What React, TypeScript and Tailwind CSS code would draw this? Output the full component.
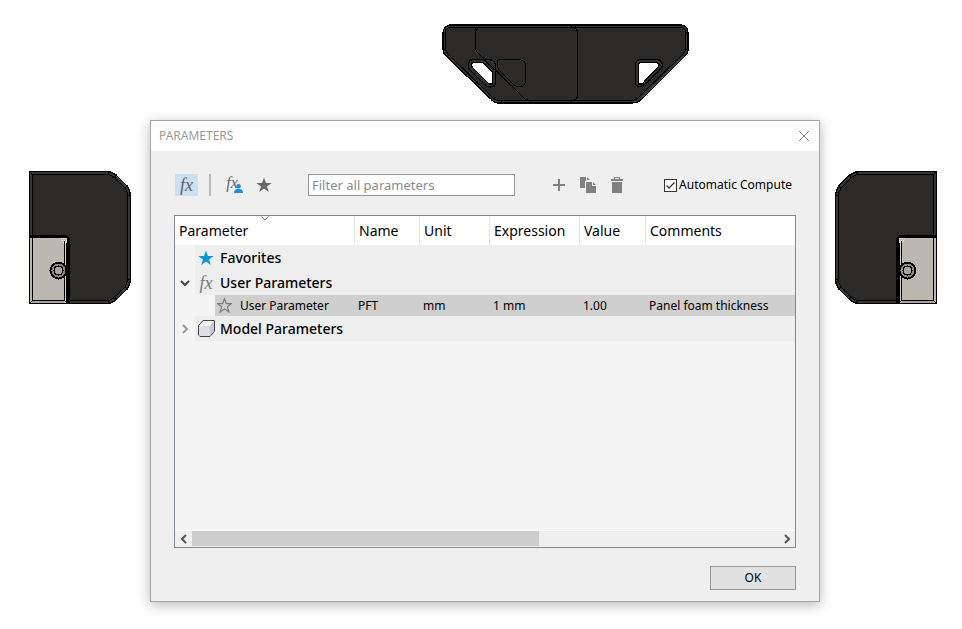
import type { ReactNode } from "react";

const columns = ["Parameter", "Name", "Unit", "Expression", "Value", "Comments"];

function FrontView() {
  return (
    <svg className="absolute left-[442px] top-[24px]" width="247" height="80" viewBox="0 0 247 80" fill="none" stroke="#000" shapeRendering="crispEdges" aria-hidden="true">
      <path
        fillRule="evenodd"
        fill="#343534"
        strokeWidth="1.4"
        d="M8 1H239Q246 2 246 9V26Q246 29 243 32L199 76Q195 79 190 79H57Q52 79 49 75L3 31Q1 28 1 25V9Q2 2 8 1Z"
      />
      <path fill="#2b2a28" d="M8 3.500H239Q243 4 243.500 8V26Q243 28 240 31L197 73Q194 76.500 189 76.500H58Q53 76.500 50 73L6 30Q3.500 27 3.500 24V8Q4 4 8 3.500Z" />
      <path d="M33.500 3V23Q33.500 27 36 29L83 75L88 77M36 4Q34 5 33.500 8M130 3.500Q135.500 4 135.500 9V71Q135.500 76 130 76.500" />
      <path d="M55.500 37Q55 35.500 59 35.500H77Q83.500 36 83.500 42V57Q83 63 77 63Q74 63 71 60L57 46Q54 42 55.500 37" />
      <path fill="#2f302f" strokeWidth="1.300" d="M31 35.500H47Q53.500 36 53.500 43V58Q53 63 48 63Q45 63 42 60L28 46Q25 42 27 38Q28 35.500 31 35.500Z" />
      <path fill="#fff" strokeWidth="1.300" d="M31 38.500H41L50.500 48V60H47L30 43Q28.500 40 31 38.500Z" />
      <path d="M42 35.500L54 47" />
      <path fill="#2f302f" strokeWidth="1.300" d="M198 35.500H215Q220 36 220.500 41Q220 44 217 47L203 60Q199 63.500 195 62Q193.500 61 193.500 57V41Q194 36 198 35.500Z" />
      <path fill="#fff" strokeWidth="1.300" d="M198 38.500H215Q218 40 216.500 43L200 60H196.500V41Q197 39 198 38.500Z" />
      <path d="M8.500 0V3M37.500 0V3M129.500 0V3M133.500 0V3M238.500 0V3M0 17.500V9.500H3M243 8.500H246M0 25.500H4M243 25.500H246M59.500 76V80M88.500 76V80M129.500 76V80M188.500 76V80" />
    </svg>
  );
}

function SideView({ className }: { className: string }) {
  return (
    <svg className={"absolute top-[171px] " + className} width="102" height="133" viewBox="0 0 102 133" fill="none" stroke="#000" shapeRendering="crispEdges" aria-hidden="true">
      <path fill="#343534" strokeWidth="1.400" d="M.7.700H79Q84 1 88 5L98 15Q101.300 19 101.300 23V109Q101 115 98 118L88 128Q84 132 79 132.300H.7Z" />
      <path fill="#2b2a28" d="M3.500 3.500H79Q83 4 86 7L96 17Q98.500 20 98.500 24V108Q98.500 113 96 116L86 126Q83 129 79 129.500H3.500Z" />
      <path d="M.5.500L3.500 3.500M79.500 0V3M98 24.500H102M98 108.500H102M79.500 129V133M86 7L88 3M96 17L99 14M86 126L88 129M96 116L99 119" />
      <path d="M0 66.500V65.500H36Q39.500 66 39.500 70V133" strokeWidth="3" />
      <path fill="#bcb9b1" stroke="none" d="M0 67H38V133H0Z" />
      <path fill="#a6a4a6" stroke="none" d="M3 130H35V133H3Z" />
      <path fill="#d6d4ce" stroke="none" d="M36 70H38V133H36Z" />
      <path d="M.5 67V132.500H38M3.500 67V129.500H35.500V70M.5 132.500L3.500 129.500M35.500 129.500L38 132M37.500 72V133" />
      <path stroke="#eee" strokeDasharray="1 1" d="M32 67.500H38M33 69.500H38M34 71.500H37" />
      <circle cx="29.500" cy="99.500" r="8" fill="#8d8b87" strokeWidth="2" />
      <circle cx="29.500" cy="99.500" r="4.500" fill="#a8a6a1" strokeWidth="1.200" />
    </svg>
  );
}

function Fx({ className }: { className: string }) {
  return <span className={"font-['Liberation_Serif',serif] italic leading-none " + className}>fx</span>;
}

function Star({ className, size, outline }: { className: string; size: number; outline?: boolean }) {
  return (
    <svg className={"shrink-0 " + className} width={size} height={size} viewBox="0 0 16 16" fill={outline ? "none" : "currentColor"} stroke={outline ? "currentColor" : "none"} strokeWidth="1.200" aria-hidden="true">
      <path d="M8 .6L9.900 6H15.600L11 9.400L12.800 15L8 11.600L3.200 15L5 9.400L.4 6H6.100Z" />
    </svg>
  );
}

function Chevron({ d, className = "" }: { d: string; className?: string }) {
  return (
    <svg className={"shrink-0 " + className} width="10" height="10" viewBox="0 0 10 10" fill="none" stroke="currentColor" strokeWidth="2" aria-hidden="true">
      <path d={d} />
    </svg>
  );
}

const RIGHT = "M3 1L7 5L3 9";
const LEFT = "M7 1L3 5L7 9";
const DOWN = "M1 3L5 7L9 3";

function ToolButton({ label, className, children }: { label: string; className: string; children: ReactNode }) {
  return (
    <button type="button" aria-label={label} className={"flex h-[22px] shrink-0 items-center justify-center " + className}>
      {children}
    </button>
  );
}

function GroupRow({ label, toggle, icon }: { label: string; toggle?: ReactNode; icon: ReactNode }) {
  return (
    <tr className="h-[25px]">
      <td colSpan={6} className="p-0">
        <div className="flex h-[25px]">
          <div className="flex w-5 shrink-0 items-center justify-center">{toggle}</div>
          <div className="flex flex-1 items-center bg-[#eeeeee] text-sm font-medium">
            <span className="flex w-[22px] justify-center">{icon}</span>
            <span className="pl-[3px]">{label}</span>
          </div>
        </div>
      </td>
    </tr>
  );
}

function Toolbar() {
  return (
    <div className="flex h-[22px] items-center text-[#808080]">
      <ToolButton label="Show all parameters" className="ml-px w-[23px] bg-[#cde0f2]">
        <Fx className="text-lg text-[#5c6064]" />
      </ToolButton>
      <div className="mx-[11px] h-[22px] w-[2px] bg-[#bcbcbc]" />
      <ToolButton label="Show user parameters" className="relative w-6">
        <Fx className="pr-1 pb-1 text-base text-[#666666]" />
        <svg className="absolute right-[3px] bottom-[3px]" width="9" height="9" viewBox="0 0 9 9" fill="#1e8ae6" aria-hidden="true">
          <circle cx="4.500" cy="2.300" r="2.300" />
          <path d="M0 9Q0 5.500 3 5H6Q9 5.500 9 9Z" />
        </svg>
      </ToolButton>
      <ToolButton label="Show favorites" className="ml-[6px] w-6">
        <Star size={16} className="text-[#666666]" />
      </ToolButton>
      <input
        type="text"
        aria-label="Filter all parameters"
        placeholder="Filter all parameters"
        className="ml-8 h-[22px] w-[207px] border border-[#969696] bg-white px-[3px] text-[13px] text-black outline-none placeholder:text-[#8c8c8c]"
      />
      <div className="ml-8 flex gap-[5px]">
        <ToolButton label="Add parameter" className="w-6">
          <svg width="12" height="12" viewBox="0 0 12 12" fill="currentColor" aria-hidden="true">
            <path d="M5 0H7V5H12V7H7V12H5V7H0V5H5Z" />
          </svg>
        </ToolButton>
        <ToolButton label="Copy parameter" className="w-6">
          <svg width="16" height="16" viewBox="0 0 16 16" fill="currentColor" aria-hidden="true">
            <path d="M0 0H6V4H5V11H0ZM7 0L10 3H7ZM6 5H12V9H16V16H6ZM13 5L16 8H13Z" />
          </svg>
        </ToolButton>
        <ToolButton label="Delete parameter" className="w-6">
          <svg width="12" height="16" viewBox="0 0 12 16" fill="currentColor" aria-hidden="true">
            <path fillRule="evenodd" d="M3 0H9V2H12V4H0V2H3ZM4 1V2H8V1ZM1 5H11V16H1Z" />
          </svg>
        </ToolButton>
      </div>
      <label className="ml-auto flex items-center gap-[2px] pr-1 text-xs whitespace-nowrap text-black">
        <span className="grid">
          <input type="checkbox" defaultChecked className="peer col-start-1 row-start-1 size-[13px] appearance-none border border-[#333333] bg-white" />
          <svg className="pointer-events-none invisible col-start-1 row-start-1 peer-checked:visible" width="13" height="13" viewBox="0 0 13 13" fill="none" stroke="#333" strokeWidth="1.300" aria-hidden="true">
            <path d="M2.500 6.500L5 9L10.500 3.500" />
          </svg>
        </span>
        Automatic Compute
      </label>
    </div>
  );
}

function ParameterTable() {
  return (
    <div className="mt-[19px] flex min-h-[333px] flex-col border border-[#828790] bg-[#f4f4f4] text-black">
      <table className="w-full table-fixed border-separate border-spacing-0">
        <colgroup>
          <col className="w-[180px]" />
          <col className="w-[65px]" />
          <col className="w-[70px]" />
          <col className="w-[90px]" />
          <col className="w-[66px]" />
          <col />
        </colgroup>
        <thead>
          <tr className="h-[29px] bg-white">
            {columns.map((name, i) => (
              <th key={name} scope="col" className="relative border-r border-[#e5e5e5] p-0 pl-1 text-left text-sm font-normal last:border-r-0">
                {name}
                {i === 0 && (
                  <svg className="absolute top-0 left-1/2 -translate-x-1/2" width="9" height="5" viewBox="0 0 9 5" fill="none" stroke="#777" aria-hidden="true">
                    <path d="M1 .5L4.500 4L8 .5" />
                  </svg>
                )}
              </th>
            ))}
          </tr>
        </thead>
        <tbody>
          <GroupRow label="Favorites" icon={<Star size={16} className="text-[#0696d7]" />} />
          <GroupRow
            label="User Parameters"
            toggle={<Chevron className="text-[#444444]" d={DOWN} />}
            icon={<Fx className="text-lg text-[#777777]" />}
          />
          <tr className="h-[21px] text-xs">
            <td className="p-0 pl-10">
              <div className="flex h-[21px] items-center gap-2 bg-[#cfcfcf] pl-[2px]">
                <Star size={15} outline className="text-[#777777]" />
                User Parameter
              </div>
            </td>
            {["PFT", "mm", "1 mm", "1.00", "Panel foam thickness"].map((value) => (
              <td key={value} className="bg-[#cfcfcf] p-0 pl-[3px] whitespace-nowrap">{value}</td>
            ))}
          </tr>
          <GroupRow
            label="Model Parameters"
            toggle={<Chevron className="text-[#999999]" d={RIGHT} />}
            icon={
              <svg width="17" height="17" viewBox="0 0 17 17" fill="none" aria-hidden="true">
                <path fill="#f8f8f8" stroke="#444" strokeLinejoin="round" d="M.5 5.500L5 .5H16.500V11L12 16.500H2L.5 15Z" />
                <path fill="#dcdde2" d="M1 6H12V16H2L1 15Z" />
                <path fill="#c5c7ce" d="M12 5.500L16 1.500V11L12 15.500Z" />
              </svg>
            }
          />
        </tbody>
      </table>
      <div className="mt-auto flex h-[17px] items-start border-t border-white bg-[#efefef]">
        <button type="button" aria-label="Scroll left" className="flex h-[15px] w-[17px] items-center justify-center text-[#555555]">
          <Chevron d={LEFT} />
        </button>
        <div className="h-[15px] flex-1">
          <div className="h-full w-[59.3%] bg-[#cdcdcd]" />
        </div>
        <button type="button" aria-label="Scroll right" className="flex h-[15px] w-[17px] items-center justify-center text-[#555555]">
          <Chevron d={RIGHT} />
        </button>
      </div>
    </div>
  );
}

export default function App() {
  return (
    <main className="relative min-h-screen overflow-hidden bg-white font-['Noto_Sans',sans-serif]">
      <FrontView />
      <SideView className="left-[29px]" />
      <SideView className="left-[835px] -scale-x-100" />
      <section
        role="dialog"
        aria-labelledby="dialog-title"
        className="absolute top-[120px] right-[142px] left-[150px] border border-[#a5a5a5] bg-[#efefef] shadow-[0_3px_12px_rgba(0,0,0,0.28)]"
      >
        <header className="flex h-[30px] items-center justify-between bg-white pr-[9px] pl-2">
          <h1 id="dialog-title" className="text-xs text-[#999999]">PARAMETERS</h1>
          <button type="button" aria-label="Close">
            <svg width="12" height="12" viewBox="0 0 12 12" fill="none" stroke="#888" aria-hidden="true">
              <path d="M1 1L11 11M11 1L1 11" />
            </svg>
          </button>
        </header>
        <div className="px-[23px] pt-[23px] pb-[11px]">
          <Toolbar />
          <ParameterTable />
          <div className="mt-[18px] flex justify-end">
            <button type="button" className="h-6 w-[86px] border border-[#999999] bg-[#e1e1e1] text-xs text-black">OK</button>
          </div>
        </div>
      </section>
    </main>
  );
}
